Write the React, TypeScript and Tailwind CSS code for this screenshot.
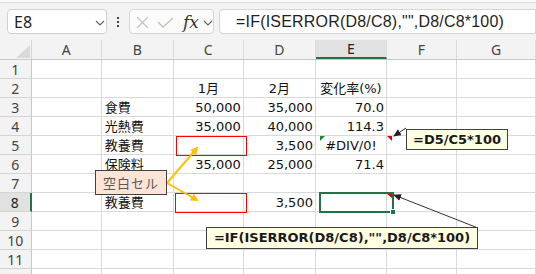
import React from 'react';

const COLS = ['A', 'B', 'C', 'D', 'E', 'F', 'G'];
const COL_W = ['w-[71px]', 'w-[73px]', 'w-[71px]', 'w-[73px]', 'w-[72px]', 'w-[71px]', 'w-[80px]'];

type Cell = { t: string; a?: 'l' | 'c' | 'r' };

const DATA: Record<number, Record<number, Cell>> = {
  2: { 2: { t: '1月', a: 'c' }, 3: { t: '2月', a: 'c' }, 4: { t: '変化率(%)', a: 'c' } },
  3: { 1: { t: '食費' }, 2: { t: '50,000', a: 'r' }, 3: { t: '35,000', a: 'r' }, 4: { t: '70.0', a: 'r' } },
  4: { 1: { t: '光熱費' }, 2: { t: '35,000', a: 'r' }, 3: { t: '40,000', a: 'r' }, 4: { t: '114.3', a: 'r' } },
  5: { 1: { t: '教養費' }, 3: { t: '3,500', a: 'r' }, 4: { t: '#DIV/0!', a: 'c' } },
  6: { 1: { t: '保険料' }, 2: { t: '35,000', a: 'r' }, 3: { t: '25,000', a: 'r' }, 4: { t: '71.4', a: 'r' } },
  8: { 1: { t: '教養費' }, 3: { t: '3,500', a: 'r' } },
};

const ALIGN = { l: 'justify-start pl-[3px]', c: 'justify-center', r: 'justify-end pr-[2px]' };

function Chevron({ className }: { className: string }) {
  return (
    <svg className={className} width="10" height="6" viewBox="0 0 10 6">
      <polyline points="1,1 5,5 9,1" fill="none" stroke="#666" strokeWidth="1.2" />
    </svg>
  );
}

function Toolbar() {
  return (
    <div className="h-[40px] bg-[#f3f3f3] relative">
      <div className="h-[3px] bg-[#fafafa] border-b border-[#dcdcdc]" />
      <div className="flex items-center pl-[7px] pt-[6px]">
        <div className="w-[100px] h-[25px] bg-white border border-[#d0d0d0] rounded-[4px] flex items-center pl-[6px] relative">
          <span className="text-[16px] text-[#222] font-['Noto_Sans',sans-serif] leading-none">E8</span>
          <Chevron className="absolute left-[87px] top-[10px]" />
        </div>
        <div className="w-[22px] flex flex-col items-center gap-[2px]">
          <span className="w-[2px] h-[2px] bg-[#444]" />
          <span className="w-[2px] h-[2px] bg-[#444]" />
          <span className="w-[2px] h-[2px] bg-[#444]" />
        </div>
        <div className="w-[85px] h-[25px] bg-[#fbfbfb] border border-[#d6d6d6] rounded-[4px] flex items-center relative">
          <svg className="absolute left-[6px] top-[6px]" width="13" height="13" viewBox="0 0 13 13">
            <path d="M1 1 L12 12 M12 1 L1 12" stroke="#c4c4c4" strokeWidth="1.2" />
          </svg>
          <svg className="absolute left-[27px] top-[7px]" width="17" height="12" viewBox="0 0 17 12">
            <polyline points="1,5 6,10 16,1" fill="none" stroke="#c2c2b4" strokeWidth="1.3" />
          </svg>
          <span className="absolute left-[53px] top-[1px] text-[17px] italic text-[#333] font-['DejaVu_Serif',serif] leading-[22px]">fx</span>
          <Chevron className="absolute left-[73px] top-[10px]" />
        </div>
        <div className="ml-[5px] flex-1 h-[25px] bg-white border border-[#d6d6d6] rounded-l-[4px] flex items-center pl-[16px]">
          <span className="text-[16px] text-[#1f1f1f] font-['Liberation_Sans',sans-serif] leading-none tracking-[0.2px]">
            =IF(ISERROR(D8/C8),"",D8/C8*100)
          </span>
        </div>
      </div>
    </div>
  );
}

function HeaderRow() {
  return (
    <div className="h-[20px] flex bg-[#f3f3f3] border-b border-[#c8c8c8] relative">
      <div className="w-[32px] h-full border-r border-[#d4d4d4] relative">
        <svg className="absolute left-[16px] top-[5px]" width="14" height="13" viewBox="0 0 14 13">
          <polygon points="14,0 14,13 0,13" fill="#d8d8d8" />
        </svg>
      </div>
      {COLS.map((c, i) => (
        <div
          key={c}
          className={`${COL_W[i]} h-full flex items-center justify-center border-r border-[#dcdcdc] text-[14px] font-['Noto_Sans',sans-serif] ${
            c === 'E' ? 'bg-[#e1e1e1] text-[#222] border-b-2 border-b-[#217346]' : 'text-[#444]'
          }`}
        >
          {c}
        </div>
      ))}
    </div>
  );
}

function Row({ n }: { n: number }) {
  const sel = n === 8;
  return (
    <div className="h-[19px] flex">
      <div
        className={`w-[32px] h-full flex items-center justify-center text-[14px] font-['Noto_Sans',sans-serif] border-b border-[#d4d4d4] ${
          sel ? 'bg-[#e1e1e1] text-[#222] border-r-2 border-r-[#217346]' : 'bg-[#f3f3f3] text-[#444] border-r border-r-[#c8c8c8]'
        }`}
      >
        {n < 12 ? n : ''}
      </div>
      {COLS.map((c, i) => {
        const cell = DATA[n]?.[i];
        return (
          <div
            key={c}
            className={`${COL_W[i]} h-full flex items-center border-r border-b border-[#d9d9d9] text-[13px] text-[#111] font-['DejaVu_Sans','Noto_Sans_CJK_JP',sans-serif] whitespace-nowrap pt-[1px] ${
              cell ? ALIGN[cell.a ?? 'l'] : ''
            }`}
          >
            {cell?.t}
          </div>
        );
      })}
    </div>
  );
}

function Overlay() {
  return (
    <svg className="absolute inset-0 pointer-events-none" width="536" height="274" viewBox="0 0 536 274">
      <defs>
        <marker id="oh" markerWidth="8" markerHeight="8" refX="6" refY="4" orient="auto" markerUnits="userSpaceOnUse">
          <polygon points="0,0 8,4 0,8" fill="#ffc000" />
        </marker>
        <marker id="bh" markerWidth="8" markerHeight="7" refX="7" refY="3.5" orient="auto" markerUnits="userSpaceOnUse">
          <polygon points="0,0 8,3.5 0,7" fill="#222" />
        </marker>
      </defs>
      <line x1="167" y1="183" x2="197" y2="148" stroke="#ffc000" strokeWidth="2" markerEnd="url(#oh)" />
      <line x1="167" y1="183" x2="197" y2="200" stroke="#ffc000" strokeWidth="2" markerEnd="url(#oh)" />
      <polygon points="320,136 325,136 320,141" fill="#1e8a3a" />
      <polygon points="387,136 392,136 392,141" fill="#e00000" />
      <polygon points="387,194 392,194 392,198" fill="#e00000" />
      <line x1="406" y1="128" x2="394" y2="136" stroke="#333" strokeWidth="1" markerEnd="url(#bh)" />
      <line x1="478" y1="228" x2="394" y2="195" stroke="#333" strokeWidth="1" markerEnd="url(#bh)" />
    </svg>
  );
}

export default function App() {
  return (
    <div className="relative w-[536px] h-[274px] overflow-hidden bg-white">
      <Toolbar />
      <HeaderRow />
      {Array.from({ length: 12 }, (_, i) => (
        <Row key={i} n={i + 1} />
      ))}

      <div className="absolute left-[176px] top-[136px] w-[71px] h-[20px] border border-[#ff0000]" />
      <div className="absolute left-[175px] top-[193px] w-[72px] h-[20px] border border-[#ff0000]" />

      <div className="absolute left-[319px] top-[192px] w-[75px] h-[21px] border-2 border-[#217346]" />
      <div className="absolute left-[390px] top-[209px] w-[6px] h-[6px] bg-[#217346] border border-white" />

      <Overlay />

      <div className="absolute left-[95px] top-[170px] w-[72px] h-[25px] bg-[#fce4d6] border border-[#404040] flex items-center justify-center text-[13px] text-[#595959] font-['Noto_Sans_CJK_JP',sans-serif] tracking-[1px]">
        空白セル
      </div>
      <div className="absolute left-[406px] top-[129px] w-[102px] h-[21px] bg-[#ffffe1] border border-[#404040] flex items-center justify-center text-[13px] font-bold text-[#1a1a1a] font-['DejaVu_Sans',sans-serif]">
        =D5/C5*100
      </div>
      <div className="absolute left-[206px] top-[227px] w-[272px] h-[22px] bg-[#ffffe1] border border-[#404040] flex items-center justify-center text-[13px] font-bold text-[#1a1a1a] font-['DejaVu_Sans',sans-serif]">
        =IF(ISERROR(D8/C8),"",D8/C8*100)
      </div>
    </div>
  );
}
